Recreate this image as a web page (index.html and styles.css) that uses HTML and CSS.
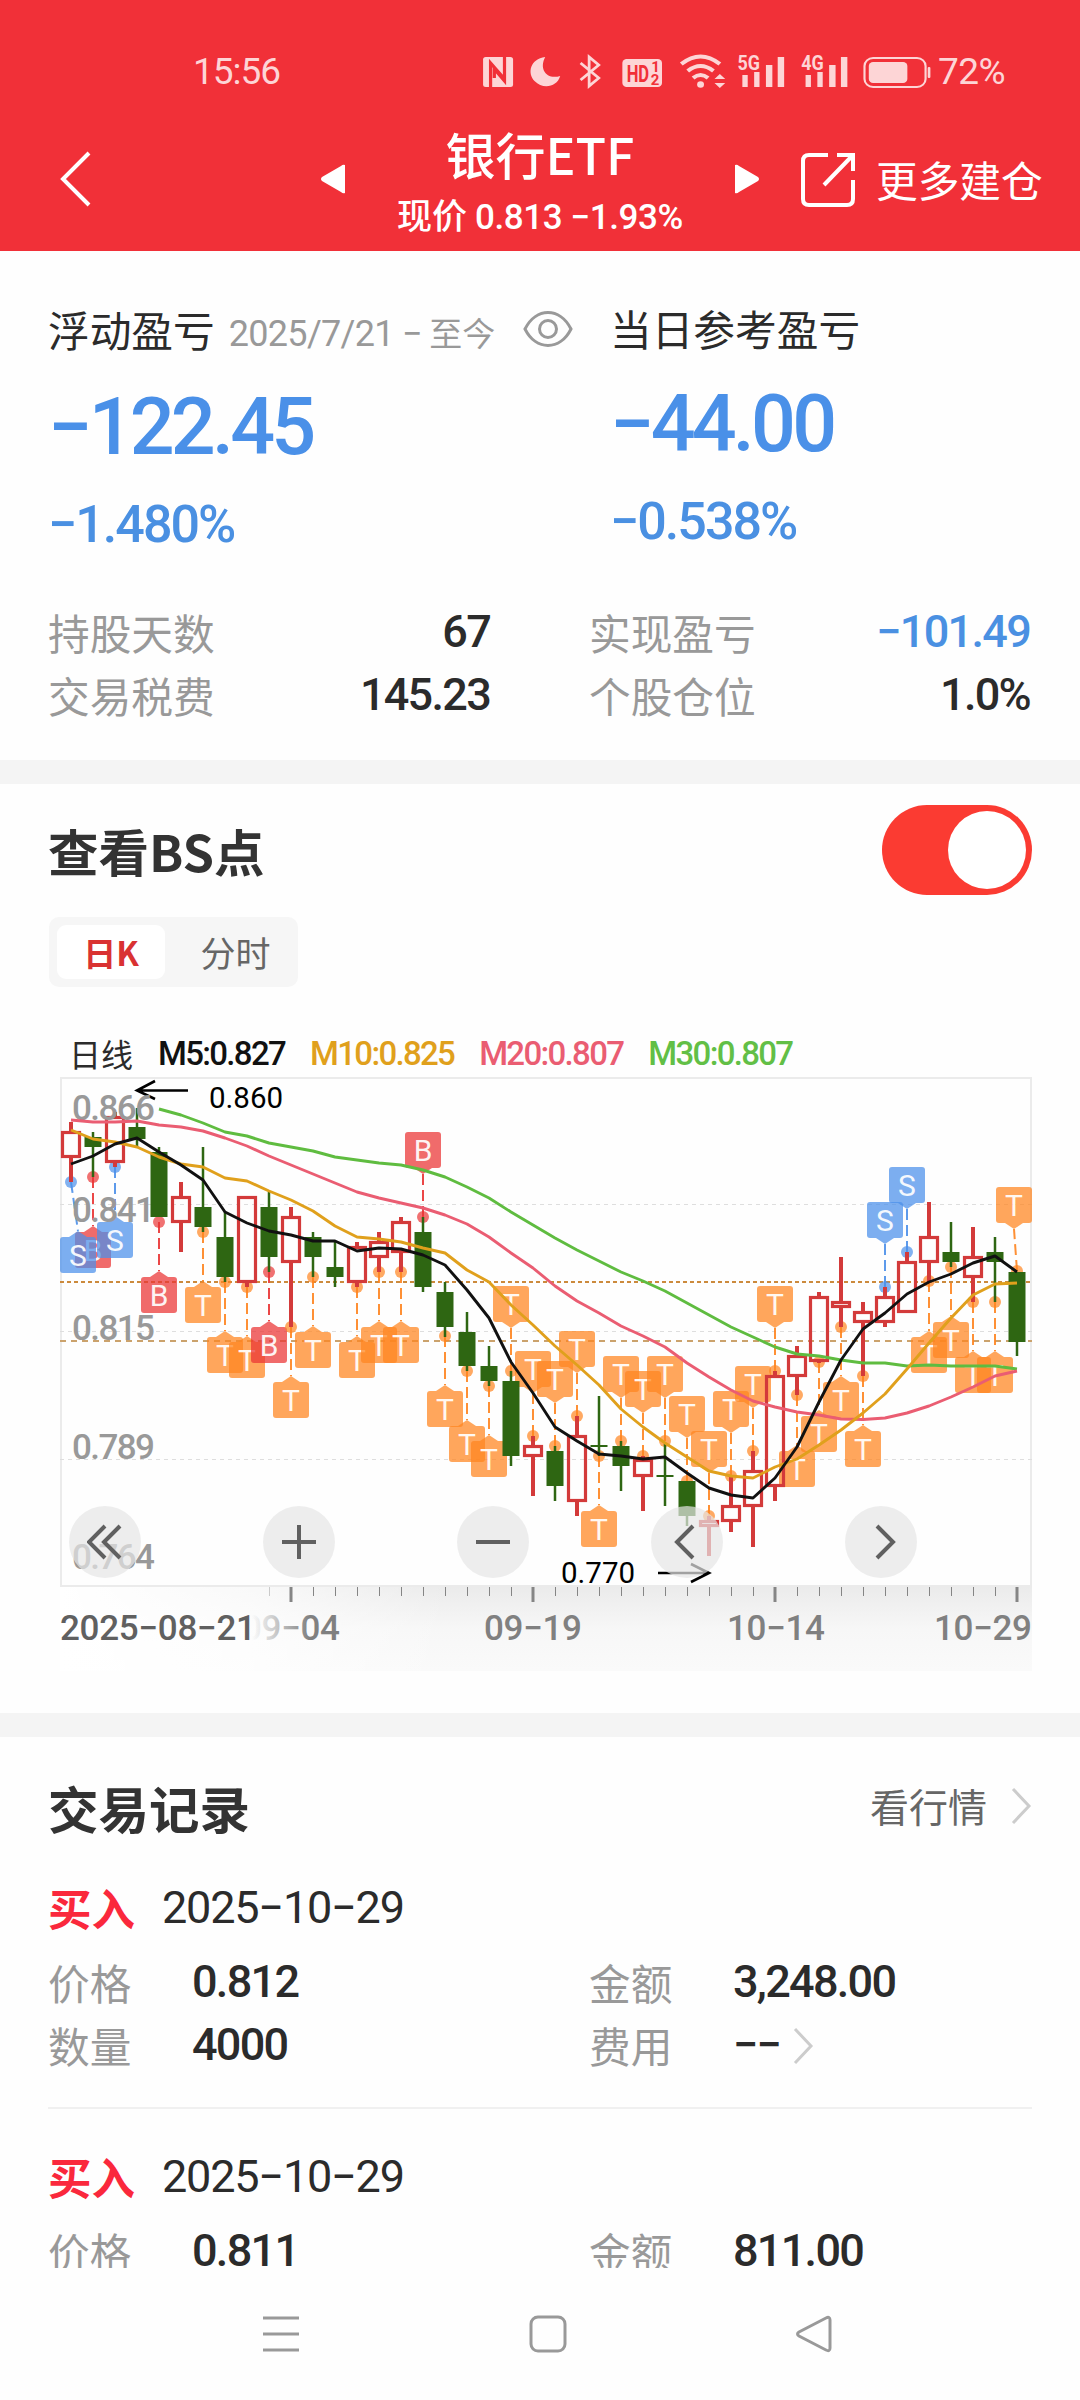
FILE: index.html
```html
<!DOCTYPE html>
<html lang="zh-CN">

<head>
    <meta charset="UTF-8">
    <meta name="viewport" content="width=device-width, initial-scale=1.0">
    <title>银行ETF</title>
    <link rel="stylesheet" href="styles.css">
</head>

<body>
    <header class="header">
        <div class="status">
            <span class="clock">15:56</span>
            <svg class="status-icons" width="450" height="44" viewBox="0 0 420 44" preserveAspectRatio="none" fill="#fdd5d6">
                <!-- nfc -->
                <rect x="1" y="8" width="28" height="30" rx="2.500" />
                <path d="M8 39V14L21 30V17M21 7V32L11.500 20V29" fill="none" stroke="#f13038" stroke-width="3" />
                <!-- moon -->
                <path d="M59 8C45 10 42 24 49 32C57 41 70 38 73 27C60 31 53 20 59 8Z" />
                <!-- bluetooth -->
                <path d="M92 14L109 29L100 37V8L109 16L92 31" fill="none" stroke="#fdd5d6" stroke-width="2.600" />
                <!-- hd -->
                <rect x="131" y="10" width="37" height="28" rx="4" />
                <text class="hd" x="135" y="33" textLength="21" lengthAdjust="spacingAndGlyphs">HD</text>
                <text class="hd-small" x="158" y="23">1</text>
                <text class="hd-small" x="157.500" y="36">2</text>
                <!-- wifi -->
                <g fill="none" stroke="#fdd5d6" stroke-width="4">
                    <path d="M186 15Q204 0 222 15" />
                    <path d="M192 22Q204 12 216 22" />
                    <path d="M197 29Q204 23 211 29" />
                </g>
                <circle cx="204" cy="35.500" r="3.200" />
                <path d="M217 30L222 25L227 30ZM217 34L222 39L227 34Z" />
                <!-- signals -->
                <text class="net" x="238.500" y="21" textLength="21" lengthAdjust="spacingAndGlyphs">5G</text>
                <path d="M243 26h5v12h-5zM254 23h5v15h-5zM265 16h6v22h-6zM276 8h6v30h-6z" />
                <text class="net" x="298" y="21" textLength="21" lengthAdjust="spacingAndGlyphs">4G</text>
                <path d="M302 26h5v12h-5zM313 23h5v15h-5zM324 16h6v22h-6zM335 8h6v30h-6z" />
                <!-- battery -->
                <rect x="357" y="9" width="57" height="29" rx="8" fill="none" stroke="#fdd5d6" stroke-width="2" />
                <rect x="361" y="13" width="36" height="21" rx="4" />
                <rect x="416" y="18" width="2.500" height="11" rx="1" />
            </svg>
            <span class="battery">72%</span>
        </div>
        <div class="navbar">
            <svg class="back" width="34" height="58" viewBox="0 0 34 58"><path d="M31 3L5 29L31 55" /></svg>
            <svg class="prev" width="24" height="30" viewBox="0 0 24 30"><path d="M24 1V29Q22 30 20 28L1 17Q-1 15 1 13L20 2Q22 0 24 1Z" /></svg>
            <div class="stock">
                <div class="stock-name">银行ETF</div>
                <div class="stock-price">现价 <span class="num">0.813 −1.93%</span></div>
            </div>
            <svg class="next" width="24" height="30" viewBox="0 0 24 30"><path d="M0 1V29Q2 30 4 28L23 17Q25 15 23 13L4 2Q2 0 0 1Z" /></svg>
            <div class="more">
                <svg width="56" height="56" viewBox="0 0 56 56"><path d="M28 3H9Q3 3 3 9V47Q3 53 9 53H47Q53 53 53 47V28M37 3H53V19M53 3L24 33" /></svg>
                <span>更多建仓</span>
            </div>
        </div>
    </header>

    <section class="summary">
        <div class="profits">
            <div class="profit">
                <div class="profit-title">浮动盈亏
                    <span class="period"><span class="num">2025/7/21 −</span> 至今</span>
                    <svg class="eye" width="50" height="38" viewBox="0 0 50 38"><path d="M2 19C13 -3 37 -3 48 19C37 41 13 41 2 19Z" /><circle cx="25" cy="19" r="8.500" /></svg>
                </div>
                <div class="amount num">−122.45</div>
                <div class="percent num">−1.480%</div>
            </div>
            <div class="profit today">
                <div class="profit-title">当日参考盈亏</div>
                <div class="amount num">−44.00</div>
                <div class="percent num">−0.538%</div>
            </div>
        </div>
        <div class="details">
            <div class="detail"><span>持股天数</span><b class="num">67</b></div>
            <div class="detail"><span>实现盈亏</span><b class="num blue">−101.49</b></div>
            <div class="detail"><span>交易税费</span><b class="num">145.23</b></div>
            <div class="detail"><span>个股仓位</span><b class="num">1.0%</b></div>
        </div>
    </section>

    <section class="kline">
        <div class="kline-head">
            <h2>查看BS点</h2>
            <div class="switch"></div>
        </div>
        <div class="tabs">
            <div class="tab active">日K</div>
            <div class="tab">分时</div>
        </div>
        <div class="legend">
            <span class="day">日线</span>
            <span class="num m5">M5:0.827</span>
            <span class="num m10">M10:0.825</span>
            <span class="num m20">M20:0.807</span>
            <span class="num m30">M30:0.807</span>
        </div>
        <div class="chart-box">
            <svg id="chart" width="972" height="594" viewBox="0 0 972 594">
                <defs>
                    <linearGradient id="down" x1="0" y1="0" x2="0" y2="1">
                        <stop offset="0" stop-color="#ebebeb" />
                        <stop offset="0.500" stop-color="#f7f7f7" />
                        <stop offset="1" stop-color="#fafafa" />
                    </linearGradient>
                    <linearGradient id="side">
                        <stop offset="0" stop-color="#fff" />
                        <stop offset="0.200" stop-color="#fff" stop-opacity="0.700" />
                        <stop offset="0.400" stop-color="#fff" stop-opacity="0" />
                    </linearGradient>
                    <linearGradient id="fade" gradientUnits="userSpaceOnUse" x1="192" y1="0" x2="250" y2="0">
                        <stop offset="0" stop-color="#808080" stop-opacity="0" />
                        <stop offset="1" stop-color="#808080" />
                    </linearGradient>
                </defs>
            </svg>
            <div class="tools">
                <button class="tool"><svg width="36" height="36" viewBox="0 0 36 36"><path d="M18 2L2 18L18 34M33 2L17 18L33 34" /></svg></button>
                <button class="tool"><svg width="36" height="36" viewBox="0 0 36 36"><path d="M1 18H35M18 1V35" /></svg></button>
                <button class="tool"><svg width="36" height="36" viewBox="0 0 36 36"><path d="M1 18H35" /></svg></button>
                <button class="tool"><svg width="36" height="36" viewBox="0 0 36 36"><path d="M24 2L8 18L24 34" /></svg></button>
                <button class="tool"><svg width="36" height="36" viewBox="0 0 36 36"><path d="M14 2L30 18L14 34" /></svg></button>
            </div>
        </div>
    </section>

    <section class="records">
        <div class="records-head">
            <h2>交易记录</h2>
            <div class="quote">看行情<svg class="arrow" width="22" height="38" viewBox="0 0 22 38"><path d="M3 2L19 19L3 36" /></svg></div>
        </div>
        <div class="record">
            <div class="record-title"><span class="buy">买入</span><span class="num">2025−10−29</span></div>
            <div class="fields">
                <div class="field"><span>价格</span><b class="num">0.812</b></div>
                <div class="field"><span>金额</span><b class="num">3,248.00</b></div>
                <div class="field"><span>数量</span><b class="num">4000</b></div>
                <div class="field"><span>费用</span><b class="num">−−</b><svg class="arrow" width="22" height="38" viewBox="0 0 22 38"><path d="M3 2L19 19L3 36" /></svg></div>
            </div>
        </div>
        <div class="record">
            <div class="record-title"><span class="buy">买入</span><span class="num">2025−10−29</span></div>
            <div class="fields">
                <div class="field"><span>价格</span><b class="num">0.811</b></div>
                <div class="field"><span>金额</span><b class="num">811.00</b></div>
            </div>
        </div>
    </section>

    <footer class="sysbar">
        <svg width="38" height="38" viewBox="0 0 38 38"><path d="M1 3H37M1 19H37M1 35H37" /></svg>
        <svg width="38" height="38" viewBox="0 0 38 38"><rect x="2" y="2" width="34" height="34" rx="7" /></svg>
        <svg width="38" height="38" viewBox="0 0 38 38"><path d="M34 5V33Q34 37 30 35L3 21Q0 19 3 17L30 3Q34 1 34 5Z" /></svg>
    </footer>

    <script>
        'use strict'
        // [type, high, top, bottom, low], r = up, g = down
        const candles = [
            ['r', 45, 54, 81, 105], ['g', 55, 60, 70, 100], ['r', 35, 39, 86, 90], ['g', 31, 50, 62, 70],
            ['g', 70, 75, 140, 140], ['r', 105, 119, 146, 175], ['g', 70, 130, 150, 155], ['g', 135, 160, 200, 205],
            ['r', 119, 119, 206, 210], ['g', 115, 130, 180, 195], ['r', 130, 139, 186, 250], ['g', 155, 160, 180, 200],
            ['g', 164, 190, 200, 210], ['r', 165, 169, 206, 210], ['r', 155, 164, 181, 195], ['r', 140, 144, 176, 195],
            ['g', 140, 155, 210, 215], ['g', 205, 215, 250, 260], ['g', 235, 255, 289, 294], ['g', 269, 289, 304, 309],
            ['g', 294, 304, 379, 389], ['r', 359, 368, 380, 419], ['g', 369, 374, 409, 424], ['r', 339, 358, 425, 439],
            ['g', 319, 368, 370, 379], ['g', 364, 369, 389, 414], ['r', 379, 382, 400, 434], ['g', 367, 398, 400, 429],
            ['g', 404, 404, 439, 449], ['r', 439, 443, 450, 479], ['r', 399, 428, 445, 455], ['r', 374, 393, 430, 470],
            ['r', 294, 298, 410, 424], ['r', 269, 278, 300, 318], ['r', 215, 219, 285, 286], ['r', 180, 224, 231, 250],
            ['r', 225, 234, 246, 299], ['r', 210, 219, 246, 250], ['r', 175, 184, 236, 236], ['r', 125, 159, 186, 205],
            ['g', 145, 175, 185, 190], ['r', 150, 179, 201, 225], ['g', 160, 175, 185, 225], ['g', 195, 195, 265, 279]
        ];
        // [candle, letter, dot y, label y, label x if moved]
        const marks = [
            [1, 'B', 100, 173], [0, 'S', 105, 178, 18], [2, 'S', 90, 163], [4, 'B', 145, 218], [6, 'T', 155, 228],
            [7, 'T', 205, 278], [8, 'T', 210, 283], [9, 'B', 195, 268], [10, 'T', 250, 323], [11, 'T', 200, 273],
            [13, 'T', 210, 283], [14, 'T', 195, 268], [15, 'T', 195, 268], [16, 'B', 140, 73], [17, 'T', 259, 332],
            [18, 'T', 294, 367], [19, 'T', 309, 382], [20, 'T', 294, 227], [21, 'T', 359, 292], [22, 'T', 369, 302],
            [23, 'T', 339, 272], [24, 'T', 379, 452], [25, 'T', 364, 297], [26, 'T', 379, 312], [27, 'T', 364, 297],
            [28, 'T', 404, 337], [29, 'T', 439, 372], [30, 'T', 399, 332], [31, 'T', 374, 307], [32, 'T', 294, 227],
            [33, 'T', 318, 392], [34, 'T', 285, 357], [35, 'T', 250, 323], [36, 'T', 299, 372], [37, 'S', 210, 143],
            [38, 'S', 175, 108], [39, 'T', 204, 278], [40, 'T', 190, 263], [41, 'T', 225, 298], [42, 'T', 225, 298],
            [43, 'T', 194, 128, 954]
        ];
        const lines = [
            ['#5fbc40', 4, [32, 38, 46, 55, 59, 66, 70, 74, 80, 83, 86, 88, 93, 100, 110, 121, 135, 148, 161, 173, 184, 195, 204, 214, 226, 238, 250, 260, 270, 277, 279, 283, 286, 286, 289, 288, 289, 289, 289, 292]],
            ['#ea5d72', 0, [43, 45, 45, 44, 48, 50, 54, 61, 69, 79, 88, 97, 106, 115, 121, 126, 131, 138, 147, 160, 176, 191, 209, 224, 236, 249, 259, 270, 286, 300, 313, 324, 330, 335, 338, 342, 342.5, 341, 336, 329, 320, 310, 299, 294]],
            ['#e0a01c', 0, [53, 62, 65, 70, 80, 87, 90, 101, 104, 114, 123, 134, 149, 160, 162, 165, 171, 176, 193, 205, 228, 248, 269, 288, 308, 332, 350, 366, 380, 394, 399, 401, 390, 382, 368, 353, 336, 317, 292, 266, 241, 218, 207, 206]],
            ['#111', 0, [87, 79, 67, 61, 75, 88, 103, 135, 146, 154, 158, 164, 164, 174, 171, 172, 178, 188, 213, 241, 285, 316, 350, 364, 377, 379, 382, 380, 396, 411, 418, 421, 401, 370, 325, 283, 252, 236, 217, 205, 197, 186, 179, 195]]
        ];
        const colors = { B: '#ea3434', S: '#4c90ea', T: '#ff8520' };
        const chart = document.querySelector('#chart');

        function add(tag, attrs, text) {
            const el = document.createElementNS('http://www.w3.org/2000/svg', tag);
            for (const key in attrs) {
                el.setAttribute(key, attrs[key]);
            }
            if (text) {
                el.textContent = text;
            }
            chart.appendChild(el);
        }

        function posX(i) {
            return 11 + 22 * i;
        }

        // frame and grid
        add('rect', { x: 1, y: 1, width: 970, height: 508, class: 'frame' });
        [127.5, 254.5, 382.5].forEach(y => add('path', { d: `M0 ${y}H972`, class: 'grid' }));
        add('path', { d: 'M0 205H972', class: 'cost' });
        add('path', { d: 'M0 264H972', class: 'cost thin' });

        // buy / sell / T marks
        marks.forEach(([i, letter, dot, y, moved]) => {
            const x = posX(i);
            const lx = moved || x;
            const side = y > dot ? -1 : 1;
            const edge = y + side * 18;
            const color = colors[letter];
            add('path', { d: `M${x} ${dot}L${lx} ${edge + side * 6}`, class: 'stem', stroke: color });
            add('circle', { cx: x, cy: dot, r: 6, fill: color, opacity: 0.7 });
            add('rect', { x: lx - 18, y: y - 18, width: 36, height: 36, rx: 3, fill: color, opacity: 0.73 });
            add('path', { d: `M${lx - 9} ${edge}h18L${lx} ${edge + side * 6}Z`, fill: color, opacity: 0.73 });
            add('text', { x: lx, y: y + 11, class: 'letter' }, letter);
        });

        // candles
        candles.forEach(([type, high, top, bottom, low], i) => {
            const x = posX(i);
            if (type == 'g') {
                add('path', { d: `M${x} ${high}V${low}`, stroke: '#2e6612', 'stroke-width': 2.5 });
                add('rect', { x: x - 8.5, y: top, width: 17, height: bottom - top, fill: '#2e6612' });
            } else {
                add('path', { d: `M${x} ${high}V${top}M${x} ${bottom}V${low}`, stroke: '#d33a3a', 'stroke-width': 4 });
                add('rect', { x: x - 8.5, y: top + 1.5, width: 17, height: bottom - top - 3, fill: 'none', stroke: '#d33a3a', 'stroke-width': 3.2 });
            }
        });

        // highest and lowest
        add('path', { d: 'M128 13.5H77M95 4L77 13.5L95 22', class: 'pointer' });
        add('text', { x: 149, y: 31, class: 'extreme' }, '0.860');
        add('path', { d: 'M598 496H649M631 487L649 496L631 505', class: 'pointer' });
        add('text', { x: 501, y: 506, class: 'extreme' }, '0.770');

        [['0.866', 43], ['0.841', 145], ['0.815', 263], ['0.789', 382], ['0.764', 492]].forEach(([text, y]) => {
            add('text', { x: 12, y: y, class: 'price', textLength: 83 }, text);
        });

        lines.forEach(([color, start, values]) => {
            const points = values.map((y, i) => posX(start + i) + ',' + y).join(' ');
            add('polyline', { points: points, class: 'ma', stroke: color });
        });

        // date axis
        add('rect', { x: 0, y: 510, width: 972, height: 84, fill: 'url(#down)' });
        add('rect', { x: 0, y: 510, width: 972, height: 84, fill: 'url(#side)' });
        for (let i = 9; i < 44; i++) {
            const big = (i - 10) % 11 == 0;
            add('rect', { x: posX(i) - (big ? 1.5 : 0), y: 510, width: big ? 3 : 1, height: big ? 15 : 9, fill: '#858585', opacity: i == 9 ? 0.4 : 1 });
        }
        add('text', { x: 0, y: 563, class: 'date first', textLength: 196 }, '2025−08−21');
        add('text', { x: 182, y: 563, class: 'date', textLength: 98, fill: 'url(#fade)' }, '09−04');
        add('text', { x: 424, y: 563, class: 'date', textLength: 98, fill: '#808080' }, '09−19');
        add('text', { x: 667, y: 563, class: 'date', textLength: 98, fill: '#808080' }, '10−14');
        add('text', { x: 874, y: 563, class: 'date', textLength: 98, fill: '#808080' }, '10−29');
    </script>
</body>

</html>
```
FILE: styles.css
```css
* {
    box-sizing: border-box;
}

body {
    margin: 0;
    width: 1080px;
    height: 2400px;
    overflow: hidden;
    display: flex;
    flex-direction: column;
    background-color: #fefefe;
    color: #2b2b2b;
    font-family: "Noto Sans CJK SC", sans-serif;
    font-size: 41.7px;
    line-height: 1;
}

svg {
    display: block;
    flex: none;
}

h2 {
    margin: 0;
    font-size: 50.5px;
    font-weight: 700;
    color: #333;
}

.num {
    font-family: Roboto, "Noto Sans CJK SC", sans-serif;
    letter-spacing: -0.038em;
}

/* header */
.header {
    flex: none;
    height: 251px;
    background-color: #f13038;
    color: #fff;
}

.status {
    display: flex;
    align-items: center;
    height: 107px;
    padding: 35px 0 0 193px;
    color: #fdd5d6;
    font-family: Roboto, sans-serif;
    font-size: 37px;
}

.clock {
    width: 289px;
    letter-spacing: -1px;
}

.battery {
    margin-left: 6px;
    letter-spacing: -0.5px;
}

.hd,
.hd-small,
.net {
    font-family: Roboto, sans-serif;
    font-weight: 700;
    font-size: 23px;
}

.hd,
.hd-small {
    fill: #f13038;
}

.hd-small {
    font-size: 14px;
}

.net {
    font-size: 20px;
}

.navbar {
    display: flex;
    align-items: center;
    height: 144px;
    padding: 0 37px 0 58px;
    fill: #fff;
}

.back,
.more svg {
    fill: none;
    stroke: #fff;
    stroke-width: 4;
}

.prev {
    margin-left: 229px;
}

.stock {
    width: 390px;
    padding-bottom: 6px;
    text-align: center;
}

.stock-name {
    height: 75px;
    line-height: 76px;
    font-size: 50px;
    font-weight: 500;
}

.stock-price {
    height: 48px;
    line-height: 48px;
    font-size: 35px;
    font-weight: 500;
}

.stock-price .num {
    letter-spacing: -0.4px;
}

.more {
    display: flex;
    align-items: center;
    gap: 20px;
    margin-left: 41px;
    padding-top: 1px;
    white-space: nowrap;
}

/* profit */
.summary {
    flex: none;
    height: 509px;
    padding: 49px 48px 0;
}

.profits {
    display: flex;
    height: 301px;
}

.profit {
    flex: none;
    width: 562px;
}

.profit.today {
    width: 420px;
}

.profit-title {
    display: flex;
    align-items: center;
    height: 60px;
    white-space: nowrap;
}

.period {
    margin: 7px 0 0 14px;
    color: #999;
    font-size: 33px;
}

.period .num {
    font-size: 36px;
    letter-spacing: -0.7px;
}

.eye {
    margin: 0 0 2px 28px;
    fill: none;
    stroke: #999;
    stroke-width: 3;
}

.amount {
    height: 134px;
    line-height: 134px;
    color: #4a90e8;
    font-size: 79px;
    font-weight: 500;
    letter-spacing: -0.048em;
}

.percent {
    height: 62px;
    line-height: 62px;
    color: #4a90e2;
    font-size: 52px;
    font-weight: 500;
}

.today .profit-title {
    height: 57px;
}

.details {
    display: grid;
    grid-template-columns: 442px 441px;
    column-gap: 99px;
}

.detail {
    display: flex;
    justify-content: space-between;
    align-items: center;
    height: 63px;
    color: #999;
}

.detail b,
.field b {
    padding-bottom: 3px;
    color: #2b2b2b;
    font-size: 45px;
    font-weight: 500;
}

.detail .blue {
    color: #4a90e2;
}

/* chart */
.kline {
    flex: none;
    height: 953px;
    padding: 21px 48px 0;
    border-top: 24px solid #f4f4f4;
}

.kline-head {
    display: flex;
    justify-content: space-between;
    align-items: center;
    height: 90px;
}

.switch {
    width: 150px;
    height: 90px;
    padding: 6px;
    border-radius: 45px;
    background-color: #fb3b32;
}

.switch::after {
    content: "";
    display: block;
    width: 78px;
    height: 78px;
    margin-left: 60px;
    border-radius: 50%;
    background-color: #fff;
}

.tabs {
    display: flex;
    width: 249px;
    height: 70px;
    margin: 22px 0 0 1px;
    padding: 8px;
    border-radius: 10px;
    background-color: #f6f6f6;
}

.tab {
    flex: 1;
    padding-left: 16px;
    text-align: center;
    line-height: 54px;
    font-size: 35px;
    color: #666;
}

.tab.active {
    flex: none;
    width: 108px;
    padding-left: 0;
    border-radius: 9px;
    background-color: #fff;
    color: #d93232;
    font-weight: 700;
    font-size: 33px;
}

.legend {
    display: flex;
    align-items: center;
    gap: 25px;
    height: 90px;
    padding: 42px 0 0 21px;
    font-size: 33px;
    font-weight: 500;
    white-space: nowrap;
}

.legend .num {
    letter-spacing: -0.051em;
}

.day {
    font-size: 32px;
    font-weight: 400;
}

.m5 {
    color: #111;
}

.m10 {
    color: #e0a01c;
}

.m20 {
    color: #ea5d72;
}

.m30 {
    color: #62bf46;
}

.chart-box {
    position: relative;
    width: 972px;
    margin-left: 12px;
}

.tools {
    position: absolute;
    left: 9px;
    top: 429px;
    display: flex;
    gap: 122px;
}

.tool {
    width: 72px;
    height: 72px;
    padding: 18px;
    border: none;
    border-radius: 50%;
    background-color: rgba(229, 229, 229, 0.7);
    fill: none;
    stroke: #606060;
    stroke-width: 4;
}

.frame {
    fill: none;
    stroke: #ebebeb;
    stroke-width: 2;
}

.grid {
    stroke: #dedede;
    stroke-width: 1.2;
    stroke-dasharray: 4 4;
}

.cost {
    stroke: #cc8a3c;
    stroke-width: 2;
    stroke-dasharray: 4 3;
}

.cost.thin {
    stroke: #cba26c;
    stroke-width: 1.8;
    stroke-dasharray: 6 5;
}

.stem {
    stroke-width: 2;
    stroke-dasharray: 11 5;
    opacity: 0.9;
}

.letter {
    fill: #fff;
    opacity: 0.92;
    font-family: Roboto, sans-serif;
    font-size: 30px;
    text-anchor: middle;
}

.pointer {
    fill: none;
    stroke: #000;
    stroke-width: 2.6;
}

.extreme {
    font-family: Roboto, sans-serif;
    font-size: 29.5px;
    fill: #000;
}

.price,
.date {
    font-family: Roboto, sans-serif;
    font-size: 35px;
    font-weight: 500;
}

.price {
    fill: #999;
}

.date.first {
    fill: #606060;
}

.ma {
    fill: none;
    stroke-width: 2.9;
    stroke-linejoin: round;
}

/* records */
.records {
    flex: none;
    height: 555px;
    padding: 32px 48px 0;
    overflow: hidden;
    border-top: 24px solid #f4f4f4;
}

.records-head {
    display: flex;
    justify-content: space-between;
    align-items: center;
    height: 76px;
}

.quote {
    display: flex;
    align-items: center;
    gap: 23px;
    padding-bottom: 3px;
    color: #666;
    font-size: 39px;
}

.arrow {
    fill: none;
    stroke: #ccc;
    stroke-width: 3;
}

.record {
    height: 264px;
    margin-bottom: 5px;
    padding-top: 33px;
    border-bottom: 2px solid #f0f0f0;
}

.record-title {
    display: flex;
    align-items: center;
    gap: 27px;
    height: 60px;
    font-size: 45px;
}

.record-title .num {
    padding-bottom: 2px;
    letter-spacing: -1.2px;
}

.buy {
    color: #fa283c;
    font-size: 43.5px;
    font-weight: 700;
}

.fields {
    display: grid;
    grid-template-columns: 541px 1fr;
    padding-top: 13px;
}

.field {
    display: flex;
    align-items: center;
    height: 63px;
    color: #999;
}

.field span {
    width: 144px;
}

.field .arrow {
    margin-left: 12px;
}

/* system keys */
.sysbar {
    display: flex;
    justify-content: center;
    align-items: center;
    gap: 229px;
    height: 132px;
    padding-left: 16px;
    fill: none;
    stroke: #999;
    stroke-width: 3;
}
```
